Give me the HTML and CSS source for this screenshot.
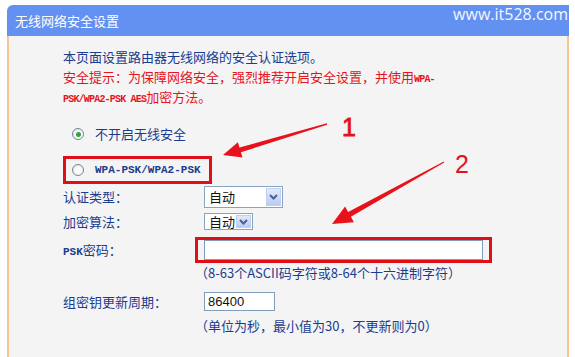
FILE: index.html
```html
<html>

<head>
  <link rel="stylesheet" href="styles.css">
</head>

<body>
  <div class="panel">
    <div class="header">无线网络安全设置</div>

    <div class="content">
      <div class="intro">
        <div>本页面设置路由器无线网络的安全认证选项。</div>
        <div class="warn">安全提示：为保障网络安全，强烈推荐开启安全设置，并使用<span class="mono-s">WPA-</span></div>
        <div class="warn"><span class="mono-s">PSK/WPA2-PSK AES</span>加密方法。</div>
      </div>

      <div class="radio-row first">
        <span class="radio checked"></span>
        <span>不开启无线安全</span>
      </div>

      <div class="mark-box">
        <div class="radio-row">
          <span class="radio"></span>
          <span class="mono">WPA-PSK/WPA2-PSK</span>
        </div>
      </div>

      <div class="row row-auth">
        <div class="label">认证类型：</div>
        <div class="select wide">
          <span class="select-text">自动</span>
          <span class="select-btn">
            <svg width="9" height="6" viewBox="0 0 9 6"><path d="M1 1 L4.5 4.5 L8 1" fill="none" stroke="#4a6290" stroke-width="2"/></svg>
          </span>
        </div>
      </div>

      <div class="row row-enc">
        <div class="label">加密算法：</div>
        <div class="select small">
          <span class="select-text">自动</span>
          <span class="select-btn">
            <svg width="9" height="6" viewBox="0 0 9 6"><path d="M1 1 L4.5 4.5 L8 1" fill="none" stroke="#4a6290" stroke-width="2"/></svg>
          </span>
        </div>
      </div>

      <div class="row row-psk">
        <div class="label"><span class="mono">PSK</span>密码：</div>
        <div class="mark-input">
          <div class="input psk"></div>
        </div>
      </div>
      <div class="hint">（8-63个ASCII码字符或8-64个十六进制字符）</div>

      <div class="row row-group">
        <div class="label">组密钥更新周期：</div>
        <div class="input period">86400</div>
      </div>
      <div class="hint">（单位为秒，最小值为30，不更新则为0）</div>
    </div>
  </div>

  <div class="watermark">www.it528.com</div>

  <svg class="arrows" width="575" height="357" viewBox="0 0 575 357">
    <polygon points="326.9,123.3 239.5,147.5 237.9,142.2 223,155 242.5,157.6 240.9,152.3 327.1,124.7" fill="#e8121c"/>
    <polygon points="443.8,161.5 348.1,211.9 345.1,206.4 332,224 353.9,222.2 350.9,216.8 444.2,162.5" fill="#e8121c"/>
    <text x="342" y="136" class="num bold">1</text>
    <text x="455" y="173" class="num">2</text>
  </svg>
</body>

</html>
```

FILE: styles.css
```css
body {
  margin: 0;
  background: #fff;
  font-family: "Noto Sans CJK SC", "Noto Sans", sans-serif;
  font-size: 13px;
  color: #1b3c8e;
  position: relative;
  width: 575px;
  height: 357px;
  overflow: hidden;
}

.panel {
  margin: 5px 0 0 7px;
  width: 562px;
}

.header {
  height: 31px;
  line-height: 31px;
  padding-left: 8px;
  background: #6291f1;
  color: #fff;
  border-top-left-radius: 6px;
}

.content {
  height: 330px;
  border-left: 2px solid #f5c68f;
  border-right: 2px solid #f5c68f;
  background: #f4f4f4;
  padding: 11px 0 0 54px;
  box-sizing: border-box;
  line-height: 16px;
}

.intro > div {
  height: 20px;
  line-height: 20px;
}

.warn {
  color: #e4141c;
}

.mono-s {
  font-family: "Liberation Mono", monospace;
  font-weight: bold;
  font-size: 10px;
  letter-spacing: -0.8px;
  line-height: 10px;
}

.mono {
  font-family: "Liberation Mono", monospace;
  font-weight: bold;
  font-size: 11px;
  line-height: 11px;
}

.radio-row {
  display: flex;
  align-items: center;
  height: 20px;
  gap: 11px;
}

.radio-row.first {
  margin-top: 17px;
  padding-left: 9px;
}

.radio {
  width: 10px;
  height: 10px;
  border-radius: 50%;
  border: 1px solid #6f8699;
  background: radial-gradient(circle at 60% 60%, #fbfbf8 40%, #dcdcd6);
  display: flex;
  align-items: center;
  justify-content: center;
}

.radio.checked::after {
  content: "";
  width: 5px;
  height: 5px;
  border-radius: 50%;
  background: #2fa63c;
}

.mark-box {
  margin-top: 12px;
  width: 149px;
  height: 28px;
  border: 3px solid #e00f16;
  box-sizing: border-box;
  padding: 1px 0 0 6px;
}

.row {
  display: flex;
  align-items: center;
}

.label {
  width: 141px;
  flex-shrink: 0;
  line-height: 16px;
}

.row-auth {
  margin-top: 2px;
}

.row-enc {
  margin-top: 5px;
}

.row-psk {
  margin-top: 7px;
}

.row-group {
  margin-top: 11px;
}

.select {
  display: flex;
  align-items: center;
  background: #fff;
  border: 1px solid #8aa3c3;
  box-sizing: border-box;
  padding: 1px;
}

.select.wide {
  width: 79px;
  height: 22px;
}

.select.small {
  width: 49px;
  height: 17px;
}

.select-text {
  flex: 1;
  padding-left: 3px;
  color: #111;
  line-height: 14px;
}

.select-btn {
  width: 15px;
  height: 100%;
  background: linear-gradient(#e2eafb, #b8cbf2);
  border: 1px solid #bfd0f2;
  box-sizing: border-box;
  display: flex;
  align-items: center;
  justify-content: center;
}

.mark-input {
  flex-shrink: 0;
  margin-left: -9px;
  border: 3px solid #e00f16;
  padding: 0 6px;
}

.input {
  background: #fff;
  border: 1px solid #7f9db9;
  box-sizing: border-box;
  color: #111;
  font-family: "Liberation Sans", Arial, sans-serif;
  font-size: 13px;
  padding-left: 3px;
  line-height: 17px;
}

.input.psk {
  width: 279px;
  height: 20px;
}

.input.period {
  width: 71px;
  height: 19px;
}

.hint {
  margin: 2px 0 0 132px;
  line-height: 16px;
}

.row-group + .hint {
  margin-top: 7px;
}

.watermark {
  position: absolute;
  top: 3px;
  right: 7px;
  font-family: "Open Sans", sans-serif;
  font-size: 16px;
  color: #f4f7ff;
}

.arrows {
  position: absolute;
  top: 0;
  left: 0;
  pointer-events: none;
}

.num {
  font-family: "Liberation Sans", Arial, sans-serif;
  font-size: 25px;
  fill: #e3121b;
}

.num.bold {
  stroke: #e3121b;
  stroke-width: 0.8px;
}
```
